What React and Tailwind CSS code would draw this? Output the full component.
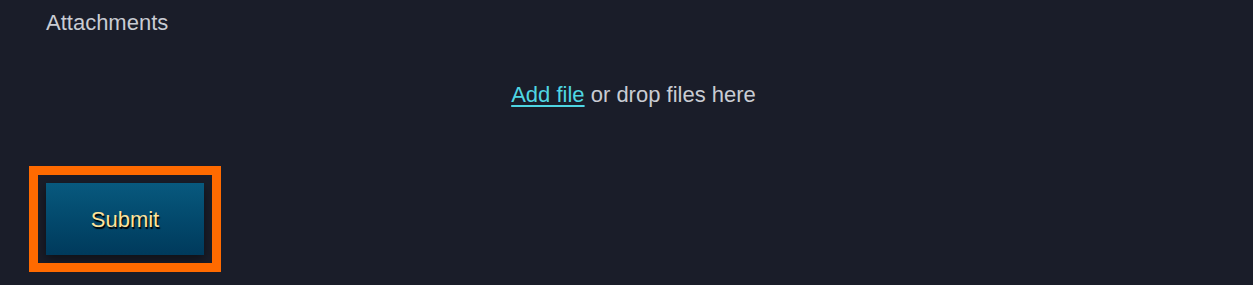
import React from 'react';

const App = () => {
  return (
    <div
      className="w-[1253px] h-[285px] bg-[#1a1d29] text-[22px] text-[#c9ccd3] overflow-hidden"
      style={{ fontFamily: '"Liberation Sans", Arial, sans-serif' }}
    >
      <div className="pl-[46px] pt-[10px] leading-[26px]">Attachments</div>

      <div className="h-[123px] flex items-center justify-center pb-[6px] pl-[14px]">
        <span>
          <a href="#" className="text-[#4fd6e3] underline underline-offset-[3px]">
            Add file
          </a>{' '}
          or drop files here
        </span>
      </div>

      <div className="pl-[46px] pt-[24px]">
        <button
          className="w-[158px] h-[72px] bg-gradient-to-b from-[#08597e] to-[#003a5c] text-[#ffe39a] shadow-[0_4px_10px_rgba(0,0,0,0.45)] outline-[9px] outline-solid outline-[#ff6a00] outline-offset-[8px] [text-shadow:1px_2px_1px_#000]"
        >
          Submit
        </button>
      </div>
    </div>
  );
};

export default App;
